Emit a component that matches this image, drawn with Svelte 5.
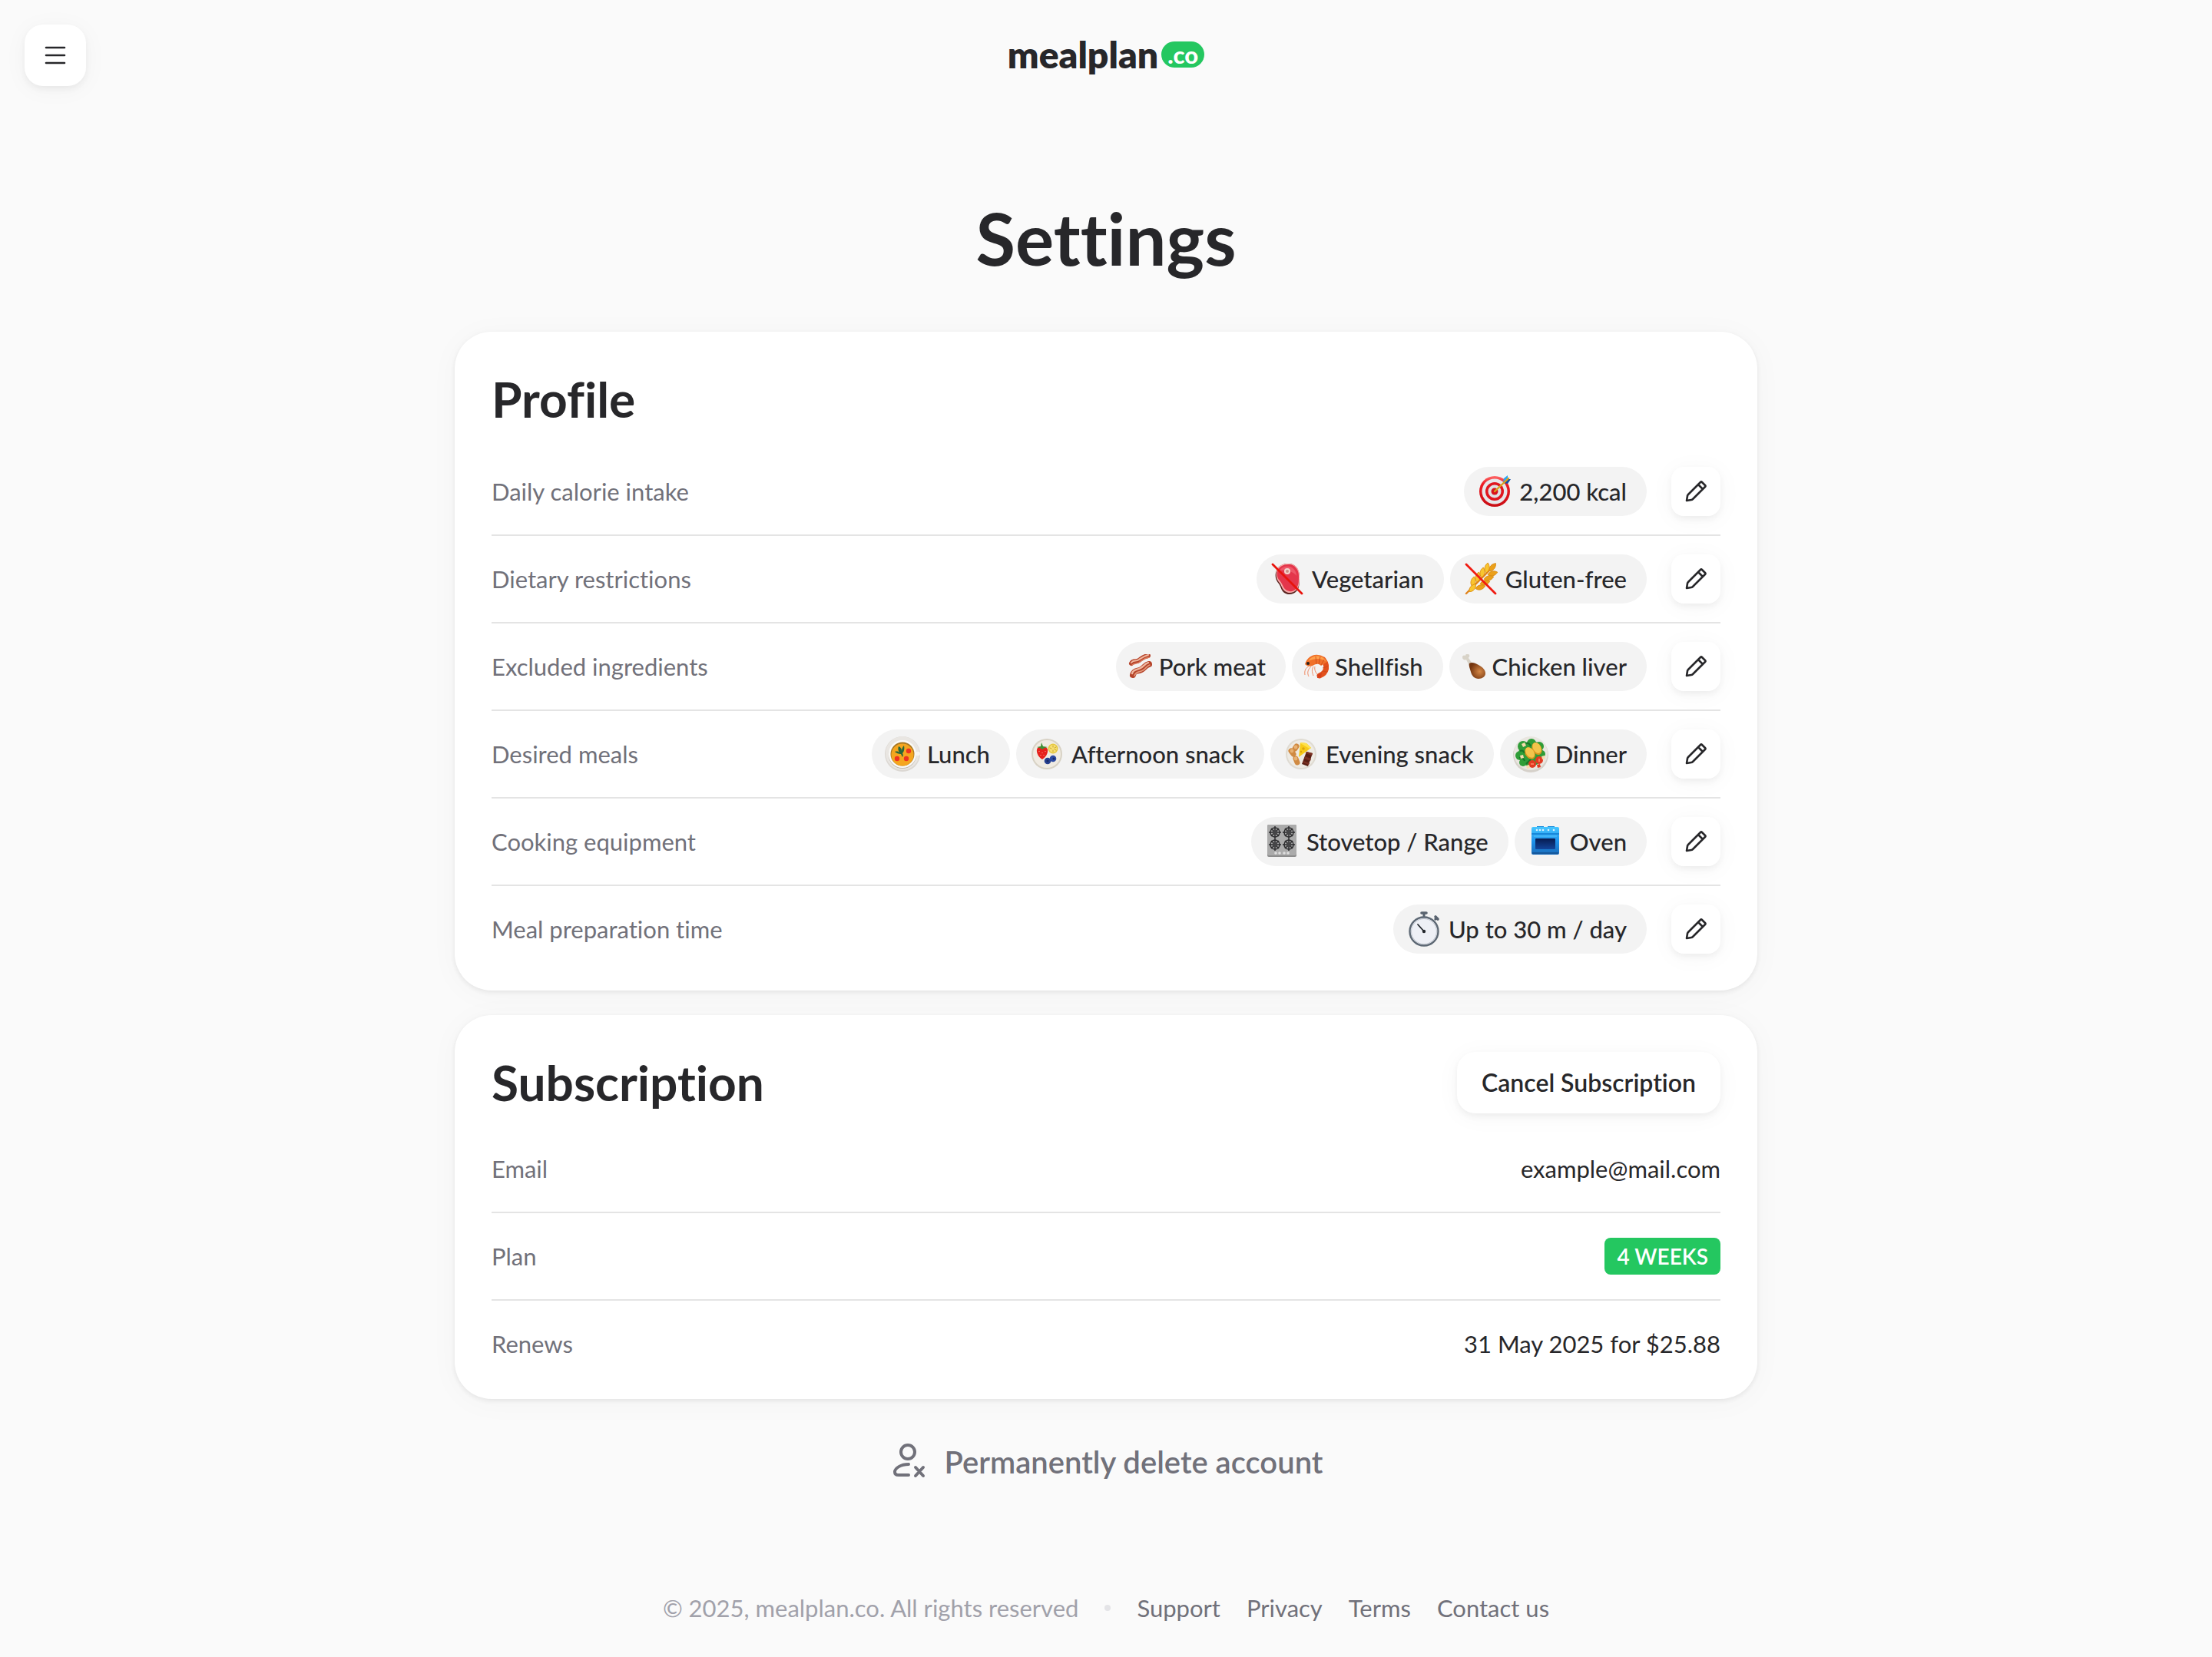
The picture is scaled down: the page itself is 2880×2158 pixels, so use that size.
<script lang="ts">
  type Chip = { icon: string; label: string; small?: boolean };
  type ProfileRow = { label: string; chips: Chip[] };

  const profile: ProfileRow[] = [
    {
      label: 'Daily calorie intake',
      chips: [{ icon: 'target', label: '2,200 kcal' }],
    },
    {
      label: 'Dietary restrictions',
      chips: [
        { icon: 'meat', label: 'Vegetarian' },
        { icon: 'wheat', label: 'Gluten-free' },
      ],
    },
    {
      label: 'Excluded ingredients',
      chips: [
        { icon: 'bacon', label: 'Pork meat', small: true },
        { icon: 'shrimp', label: 'Shellfish', small: true },
        { icon: 'drumstick', label: 'Chicken liver', small: true },
      ],
    },
    {
      label: 'Desired meals',
      chips: [
        { icon: 'soup', label: 'Lunch' },
        { icon: 'fruit', label: 'Afternoon snack' },
        { icon: 'cheese', label: 'Evening snack' },
        { icon: 'salad', label: 'Dinner' },
      ],
    },
    {
      label: 'Cooking equipment',
      chips: [
        { icon: 'stovetop', label: 'Stovetop / Range' },
        { icon: 'oven', label: 'Oven' },
      ],
    },
    {
      label: 'Meal preparation time',
      chips: [{ icon: 'stopwatch', label: 'Up to 30 m / day' }],
    },
  ];

  const footerLinks = ['Support', 'Privacy', 'Terms', 'Contact us'];

  // burner centres on the stovetop icon
  const burners = [
    [15, 12],
    [33, 12],
    [15, 28],
    [33, 28],
  ];

  // x, y, rotation of each wheat grain, tip first
  const grains = [
    [39, 9, 40],
    [32, 10, 10],
    [39, 17, 75],
    [26, 16, 10],
    [34, 23, 75],
    [20, 22, 10],
    [29, 29, 75],
    [14, 28, 10],
    [23, 35, 75],
    [13, 36, 40],
  ];
</script>

{#snippet chipIcon(name: string)}
  {#if name === 'target'}
    <svg viewBox="0 0 48 48" aria-hidden="true">
      <defs>
        <linearGradient id="target-red" x1="0" y1="0" x2="0" y2="1">
          <stop offset="0" stop-color="#ff6b6b" />
          <stop offset="0.25" stop-color="#ee1c25" />
          <stop offset="1" stop-color="#c90d14" />
        </linearGradient>
      </defs>
      <circle cx="24" cy="24" r="20" fill="url(#target-red)" />
      <circle cx="24" cy="24" r="16.5" fill="#e6e7ea" />
      <circle cx="24" cy="24" r="12" fill="#e0161f" />
      <circle cx="24" cy="24" r="8.5" fill="#dfe1e5" />
      <circle cx="24" cy="24" r="4.5" fill="#d9141c" />
      <path d="M35 12l1-5 5-4v4z" fill="#2aa5f5" />
      <path d="M36 13l5 1 4-6-4 0z" fill="#1450a8" />
      <path d="M24 24L42 7" stroke="#d9a21b" stroke-width="2.4" stroke-linecap="round" />
    </svg>
  {:else if name === 'meat'}
    <svg viewBox="0 0 48 48" aria-hidden="true">
      <path d="M9 16C11 7 18 4 26 4s14 7 14 17c0 8 0 15-4 19-4 5-12 5-16 2-5-4-4-9-8-13-3-4-4-9-3-13z" fill="#5b2420" />
      <path d="M10 14C12 6 18 4 26 4s14 6 14 16c0 8 0 14-4 18-4 5-11 5-15 2-5-4-4-8-8-12-3-4-4-9-3-14z" fill="#f4a9a8" />
      <path d="M11 14c2-6 8-9 15-9s13 6 13 15c0 8 0 13-4 17-3 4-9 4-13 1-4-3-4-8-8-12-3-3-4-8-3-12z" fill="#e4364b" />
      <path d="M14 13c3-5 8-6 13-5s9 6 9 12c-4-6-14-8-22-7z" fill="#ee5768" />
      <circle cx="24" cy="14" r="4" fill="#f3d6cf" />
      <circle cx="24" cy="14" r="2" fill="#c98f84" />
      <path d="M5 5l38 38" stroke="#e8130c" stroke-width="2.8" stroke-linecap="round" />
    </svg>
  {:else if name === 'wheat'}
    <svg viewBox="0 0 48 48" aria-hidden="true">
      <path d="M5 43L38 10" stroke="#e0821a" stroke-width="2.4" stroke-linecap="round" />
      {#each grains as [x, y, turn], i}
        <path
          d="M0-7C4-3 4 3 0 6-4 3-4-3 0-7z"
          transform={`translate(${x} ${y}) rotate(${turn})`}
          fill={i % 2 ? '#f9c52f' : '#eba01a'}
          stroke="#d98a12"
          stroke-width="0.8"
        />
      {/each}
      <path d="M5 5l38 38" stroke="#f01a10" stroke-width="2.8" stroke-linecap="round" />
    </svg>
  {:else if name === 'bacon'}
    <svg viewBox="0 0 32 32" aria-hidden="true">
      <g fill="none" stroke-linecap="round">
        <path d="M4 12c3-5 6-1 10-4s5-5 12-6" stroke="#b5432a" stroke-width="6" />
        <path d="M4 11c3-4 6-1 10-4s5-4 12-6" stroke="#f0b8a0" stroke-width="2" />
        <path d="M5 14c4-3 6-1 10-4s6-5 12-6" stroke="#db7b5d" stroke-width="1.4" />
        <path d="M6 27c2-7 6-4 11-7s5-6 10-7" stroke="#b5432a" stroke-width="8" />
        <path d="M5 25c2-6 6-4 11-7s5-5 10-7" stroke="#f0b8a0" stroke-width="2.4" />
        <path d="M8 28c2-6 6-4 11-7s4-5 9-7" stroke="#e39a7c" stroke-width="1.6" />
      </g>
    </svg>
  {:else if name === 'shrimp'}
    <svg viewBox="0 0 32 32" aria-hidden="true">
      <path d="M7 15c-5 3-7 6-6 12M9 16c-5 5-5 9-3 13M12 16c-3 5-1 9 0 12M14 16c-1 4 1 8 3 10" fill="none" stroke="#f08a63" stroke-width="1" />
      <path d="M25 7c6 8 5 17-5 21" fill="none" stroke="#e2501c" stroke-width="7" stroke-linecap="round" />
      <path d="M1 13C4 4 11 0 18 1c6 0 10 4 12 9l-8 5c-4-4-8-2-11 0-3 1-7 1-10-2z" fill="#f0702a" />
      <path d="M5 9c4-6 10-8 16-6 4 1 6 4 8 7-6-5-14-5-24-1z" fill="#ffa04a" />
      <path d="M15 3l1 10M21 3l-2 10M26 7l-4 7M31 16l-7 2M30 23l-6-1" stroke="#c9481a" stroke-width="0.8" />
      <path d="M17 27l6-3-1 6-5 1z" fill="#d8401a" />
      <circle cx="5" cy="12" r="2" fill="#27201d" />
    </svg>
  {:else if name === 'drumstick'}
    <svg viewBox="0 0 32 32" aria-hidden="true">
      <path d="M1 4c0-3 3-3 4-2 0-3 4-3 5-1 1 2-1 3-1 4l5 7-4 3-4-8C4 8 1 7 1 4z" fill="#d8d3c8" />
      <defs>
        <radialGradient id="drumstick-meat" cx="0.65" cy="0.55" r="0.6">
          <stop offset="0" stop-color="#d58745" />
          <stop offset="1" stop-color="#74350f" />
        </radialGradient>
      </defs>
      <path d="M10 12c3-2 7-1 12 2 6 3 9 7 9 11 0 4-4 7-9 7s-9-4-10-9c-1-4-3-8-2-11z" fill="url(#drumstick-meat)" />
    </svg>
  {:else if name === 'soup'}
    <svg viewBox="0 0 48 48" aria-hidden="true">
      <circle cx="24" cy="24" r="23" fill="#dcd8d3" />
      <circle cx="24" cy="23" r="22" fill="#e9e6e2" />
      <rect x="38" y="21" width="9" height="5" rx="2" fill="#f7f5f3" />
      <circle cx="24" cy="25" r="18" fill="#bdb7ae" />
      <circle cx="24" cy="24" r="18" fill="#fbfaf8" />
      <circle cx="24" cy="24" r="15.5" fill="#a87823" />
      <circle cx="24" cy="25" r="14.5" fill="#f5a61f" />
      <path d="M22 24c-3 0-6-1-8-3 3-1 5 0 6 1-2-3-2-6-1-8 3 1 4 4 4 6 0-3 1-5 3-7 1 4 0 8-2 10 1 2 1 3 0 5z" fill="#28663a" />
      <circle cx="32" cy="20" r="3.2" fill="#ee3322" />
      <circle cx="17" cy="30" r="3.2" fill="#ee3322" />
      <circle cx="29" cy="30" r="3.2" fill="#ee3322" />
    </svg>
  {:else if name === 'fruit'}
    <svg viewBox="0 0 48 48" aria-hidden="true">
      <circle cx="24" cy="24" r="20" fill="#d8d2c5" />
      <circle cx="24" cy="24" r="18" fill="#f0ebe2" />
      <path d="M11 18c1-4 5-4 7-2 3-2 6-1 7 2 1 5-3 11-7 13-4-2-8-8-7-13z" fill="#e6211c" />
      <path d="M11 15l5-1 1-5 2 5 6 1-4 1-3 2-3-2z" fill="#3f8f34" />
      <path d="M14 20v1M18 22v1M22 20v1M16 25v1M20 25v1" stroke="#ffb09a" stroke-width="1" />
      <circle cx="32" cy="17" r="6.5" fill="#e6c93f" />
      <circle cx="32" cy="17" r="5" fill="#f7df74" />
      <path d="M32 13v2M32 19v2M28 16l2 1M34 18l2 1M36 15l-2 1" stroke="#c9a52a" stroke-width="1" stroke-linecap="round" />
      <circle cx="25" cy="33" r="4.3" fill="#27408f" />
      <circle cx="32" cy="30" r="4.3" fill="#2c4aa3" />
      <circle cx="25" cy="33" r="1.5" fill="#182a66" />
      <circle cx="33" cy="30" r="1.5" fill="#182a66" />
    </svg>
  {:else if name === 'cheese'}
    <svg viewBox="0 0 48 48" aria-hidden="true">
      <circle cx="24" cy="24" r="20" fill="#dfdbd2" />
      <circle cx="24" cy="24" r="18" fill="#eeebe4" />
      <g stroke="#d08a42" stroke-width="7" stroke-linecap="round">
        <path d="M18 14l-2 3M11 20l3 4M17 30l2 5" />
      </g>
      <circle cx="17" cy="15" r="2.4" fill="#e8b273" />
      <circle cx="12" cy="20" r="2.4" fill="#e8b273" />
      <circle cx="17" cy="30" r="2.4" fill="#e8b273" />
      <path d="M23 9l8 1 6 6-16 12z" fill="#f8cb18" />
      <path d="M23 9l8 1 6 6-2 1-12-7z" fill="#ffe14a" />
      <circle cx="27" cy="17" r="1.8" fill="#dca50c" />
      <circle cx="24" cy="21" r="1.2" fill="#dca50c" />
      <path d="M31 21l8 2-6 17-8-3z" fill="#5a1f14" />
      <path d="M31 21l8 2-1 3-8-3zM29 27l8 3-1 3-8-3zM27 33l8 3-1 2-8-3z" fill="#7b3122" />
    </svg>
  {:else if name === 'salad'}
    <svg viewBox="0 0 48 48" aria-hidden="true">
      <circle cx="24" cy="25" r="23" fill="#d6d1ca" />
      <circle cx="24" cy="23" r="22" fill="#e9e6e0" />
      <g fill="#2f9d38">
        <circle cx="24" cy="24" r="16" />
        <circle cx="14" cy="14" r="7" />
        <circle cx="25" cy="10" r="6" />
        <circle cx="35" cy="14" r="6" />
        <circle cx="10" cy="26" r="6" />
        <circle cx="14" cy="35" r="5" />
        <circle cx="38" cy="24" r="5" />
      </g>
      <path d="M10 20q4-2 6 3M18 10q4-1 6 4M9 29q5-1 7 4M30 9q4 1 4 5M18 37q4-4 6-6" stroke="#187329" stroke-width="2" fill="none" />
      <ellipse cx="32" cy="17" rx="6" ry="8.5" transform="rotate(-28 32 17)" fill="#d9961d" />
      <ellipse cx="32" cy="16" rx="5" ry="7.5" transform="rotate(-28 32 16)" fill="#f3c54b" />
      <ellipse cx="23" cy="23" rx="6" ry="8.5" transform="rotate(-34 23 23)" fill="#d9961d" />
      <ellipse cx="23" cy="22" rx="5" ry="7.5" transform="rotate(-34 23 22)" fill="#f3c54b" />
      <circle cx="26" cy="37" r="5" fill="#e23a22" />
      <circle cx="35" cy="32" r="5" fill="#e23a22" />
      <path d="M32 38l4-1 1 4-4 1z" fill="#e23a22" />
      <path d="M24 37h4M35 30v4" stroke="#ff8a6b" stroke-width="1.6" />
      <path d="M12 11l4-2 2 4-4 2zM10 26l4-1 1 4-4 1zM18 39l4-1 1 4-4 1zM38 27l4-1 1 4-4 1z" fill="#f6dcae" />
    </svg>
  {:else if name === 'stovetop'}
    <svg viewBox="0 0 48 48" aria-hidden="true">
      <rect x="5" y="2" width="38" height="42" rx="2" fill="#8d8d8d" />
      <rect x="5" y="2" width="38" height="40" rx="2" fill="#ababab" />
      {#each burners as [x, y]}
        <g stroke="#2d2d2f" fill="none" stroke-width="1.5">
          <circle cx={x} cy={y} r="6" />
          <path d={`M${x} ${y - 8}v16M${x - 8} ${y}h16M${x - 5} ${y - 5}l10 10M${x + 5} ${y - 5}l-10 10`} />
        </g>
        <circle cx={x} cy={y} r="3.4" fill="#454547" />
      {/each}
      <g fill="#dedede">
        <circle cx="16" cy="39" r="1.8" />
        <circle cx="21" cy="39" r="1.8" />
        <circle cx="27" cy="39" r="1.8" />
        <circle cx="32" cy="39" r="1.8" />
      </g>
    </svg>
  {:else if name === 'oven'}
    <svg viewBox="0 0 48 48" aria-hidden="true">
      <defs>
        <linearGradient id="oven-body" x1="0" y1="0" x2="0" y2="1">
          <stop offset="0" stop-color="#46c6ff" />
          <stop offset="0.5" stop-color="#1e93ec" />
          <stop offset="1" stop-color="#1a6cba" />
        </linearGradient>
        <linearGradient id="oven-window" x1="0" y1="0" x2="0" y2="1">
          <stop offset="0" stop-color="#071c50" />
          <stop offset="1" stop-color="#12449a" />
        </linearGradient>
      </defs>
      <path d="M13 4h9v2h-9zM27 4h9v2h-9z" fill="#178bdc" />
      <rect x="6" y="5" width="36" height="36" rx="2" fill="url(#oven-body)" />
      <path d="M6 14h36" stroke="#0f7bd0" stroke-width="1.4" />
      <path d="M9 17h30" stroke="#4fbef8" stroke-width="1.2" />
      <rect x="11" y="20" width="26" height="14" rx="1" fill="url(#oven-window)" />
      <g fill="#d9f2ff">
        <circle cx="13" cy="9" r="1.3" />
        <circle cx="17" cy="9" r="1.3" />
        <circle cx="21" cy="9" r="1.3" />
        <circle cx="28" cy="9" r="1.3" />
        <circle cx="35" cy="9" r="1.3" />
      </g>
      <path d="M7 39h34" stroke="#15508f" stroke-width="1.6" />
    </svg>
  {:else if name === 'stopwatch'}
    <svg viewBox="0 0 48 48" aria-hidden="true">
      <path d="M24 3v6M38 12l3-3" stroke="#56606c" stroke-width="3" />
      <path d="M21 3h6M39 8l3 3" stroke="#59636f" stroke-width="3.6" stroke-linecap="round" />
      <circle cx="24" cy="27" r="18.5" fill="#eef0f6" stroke="#5d6874" stroke-width="2.4" />
      <circle cx="24" cy="27" r="16.5" fill="none" stroke="#c3c8d1" stroke-width="1" />
      <path d="M16 18l8 9" stroke="#23272c" stroke-width="1.8" stroke-linecap="round" />
      <circle cx="24" cy="27" r="2.2" fill="#23272c" />
    </svg>
  {/if}
{/snippet}

<div class="page">
  <header class="topbar">
    <button class="icon-button menu" aria-label="Open menu">
      <svg viewBox="0 0 32 32" aria-hidden="true">
        <path d="M4 6h24M4 16h24M4 26h24" />
      </svg>
    </button>
    <a class="logo" href="/">mealplan<span>.co</span></a>
  </header>

  <main>
    <h1>Settings</h1>

    <section class="card profile">
      <div class="card-head">
        <h2>Profile</h2>
      </div>
      <dl>
        {#each profile as row}
          <div class="row">
            <dt>{row.label}</dt>
            <dd>
              <div class="chips">
                {#each row.chips as chip}
                  <span class="chip" class:small={chip.small}>
                    {@render chipIcon(chip.icon)}
                    {chip.label}
                  </span>
                {/each}
              </div>
              <button class="icon-button" aria-label={`Edit ${row.label.toLowerCase()}`}>
                <svg viewBox="0 0 32 32" aria-hidden="true">
                  <path d="M4 28l1-6q0-1 1-2L22 4q1-1 2 0l4 4q1 1 0 2L12 26q-1 1-2 1zM19 7l6 6" />
                </svg>
              </button>
            </dd>
          </div>
        {/each}
      </dl>
    </section>

    <section class="card subscription">
      <div class="card-head">
        <h2>Subscription</h2>
        <button class="cancel">Cancel Subscription</button>
      </div>
      <dl>
        <div class="row">
          <dt>Email</dt>
          <dd>example@mail.com</dd>
        </div>
        <div class="row">
          <dt>Plan</dt>
          <dd><span class="badge">4 WEEKS</span></dd>
        </div>
        <div class="row">
          <dt>Renews</dt>
          <dd>31 May 2025 for $25.88</dd>
        </div>
      </dl>
    </section>

    <button class="delete">
      <svg viewBox="0 0 48 48" aria-hidden="true">
        <circle cx="24" cy="11" r="9" />
        <path d="M25 27C15 27 7 32 7 37q0 4 5 4h13M34 31l10 11M44 31L34 42" />
      </svg>
      Permanently delete account
    </button>
  </main>

  <footer>
    <span>© 2025, mealplan.co. All rights reserved</span>
    <span class="dot"></span>
    <nav>
      {#each footerLinks as link}
        <a href="/">{link}</a>
      {/each}
    </nav>
  </footer>
</div>

<style>
  :global(body) {
    background: #fafafa;
  }
  .page {
    display: flex;
    flex-direction: column;
    min-height: 100vh;
    box-sizing: border-box;
    color: #27272a;
    font-family: Lato, 'Liberation Sans', sans-serif;
    font-size: 31px;
    line-height: 48px;
    font-variant-ligatures: none;
  }
  button {
    border: 0;
    background: #fff;
    color: inherit;
    font: inherit;
    font-variant-ligatures: none;
    cursor: pointer;
  }
  a {
    color: inherit;
    text-decoration: none;
  }
  svg {
    display: block;
    flex: none;
  }
  h1,
  h2,
  dl,
  dd {
    margin: 0;
  }

  .topbar {
    display: grid;
    grid-template-columns: 1fr auto 1fr;
    align-items: center;
    padding: 32px;
  }
  .icon-button {
    display: flex;
    align-items: center;
    justify-content: center;
    flex: none;
    width: 64px;
    height: 64px;
    padding: 0;
    border-radius: 16px;
    box-shadow:
      0 4px 8px rgba(0, 0, 0, 0.05),
      0 4px 32px rgba(0, 0, 0, 0.04);
  }
  .icon-button svg {
    width: 32px;
    height: 32px;
    fill: none;
    stroke: #27272a;
    stroke-width: 2.6;
    stroke-linecap: round;
    stroke-linejoin: round;
  }
  .menu {
    width: 80px;
    height: 80px;
    border-radius: 24px;
  }
  .logo {
    display: flex;
    align-items: center;
    gap: 4px;
    padding-bottom: 2px;
    font-size: 48px;
    font-weight: 800;
  }
  .logo span {
    padding: 0 8px;
    border-radius: 17px;
    background: #24c760;
    color: #fff;
    font-size: 31px;
    font-weight: 900;
    line-height: 34px;
  }

  main {
    display: flex;
    flex-direction: column;
    width: 100%;
    max-width: 1696px;
    margin: 0 auto;
  }
  h1 {
    padding: 108px 0 64px;
    font-size: 94px;
    font-weight: 700;
    line-height: 116px;
    text-align: center;
  }
  h2 {
    font-size: 64px;
    font-weight: 700;
    line-height: 80px;
  }
  .card {
    padding: 48px 48px 24px;
    border-radius: 48px;
    background: #fff;
    box-shadow:
      0 2px 6px rgba(0, 0, 0, 0.08),
      0 4px 40px rgba(0, 0, 0, 0.03);
  }
  .card-head {
    display: flex;
    align-items: center;
    justify-content: space-between;
    margin-bottom: 24px;
  }
  .subscription {
    margin-top: 32px;
    padding-bottom: 16px;
  }
  .subscription .card-head {
    margin-bottom: 16px;
  }
  .row {
    display: flex;
    align-items: center;
    justify-content: space-between;
    min-height: 64px;
    padding: 24px 0;
  }
  .row + .row {
    border-top: 2px solid #e4e4e4;
  }
  dt {
    color: #71717a;
  }
  dd {
    display: flex;
    align-items: center;
    gap: 32px;
  }
  .chips {
    display: flex;
    gap: 8px;
  }
  .chip {
    display: flex;
    align-items: center;
    gap: 8px;
    height: 64px;
    padding: 0 26px 0 16px;
    border-radius: 32px;
    background: #f3f3f3;
    font-weight: 500;
  }
  .chip svg {
    width: 48px;
    height: 48px;
  }
  .chip.small svg {
    width: 32px;
    height: 32px;
  }
  .cancel {
    height: 80px;
    padding: 0 32px;
    border-radius: 24px;
    font-size: 32px;
    font-weight: 600;
    box-shadow:
      0 4px 8px rgba(0, 0, 0, 0.05),
      0 4px 32px rgba(0, 0, 0, 0.04);
  }
  .badge {
    padding: 0 16px;
    border-radius: 8px;
    background: #24c760;
    color: #fff;
    font-size: 28px;
    font-weight: 600;
  }
  .delete {
    display: flex;
    align-items: center;
    align-self: center;
    gap: 24px;
    margin-top: 50px;
    padding: 8px;
    background: none;
    color: #71717a;
    font-size: 40px;
    font-weight: 600;
  }
  .delete svg {
    width: 48px;
    height: 48px;
    fill: none;
    stroke: currentColor;
    stroke-width: 4;
    stroke-linecap: round;
  }

  footer {
    display: flex;
    align-items: center;
    justify-content: center;
    gap: 34px;
    margin-top: auto;
    padding-bottom: 40px;
    color: #a1a1aa;
  }
  .dot {
    width: 8px;
    height: 8px;
    border-radius: 50%;
    background: #e4e4e7;
  }
  nav {
    display: flex;
    gap: 34px;
    color: #71717a;
  }
</style>
